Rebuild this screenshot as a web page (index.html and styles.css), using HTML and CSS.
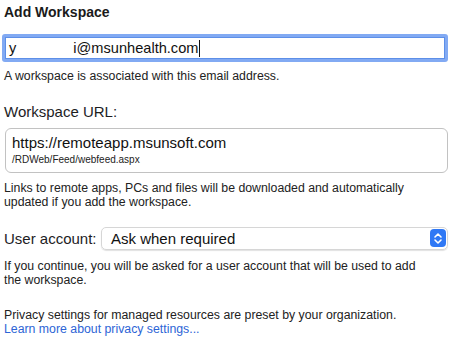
FILE: index.html
```html
<!DOCTYPE html>
<html lang="en">
<head>
  <meta charset="UTF-8">
  <meta name="viewport" content="width=device-width, initial-scale=1.0">
  <title>Add Workspace</title>
  <link rel="stylesheet" href="styles.css">
</head>
<body>
  <div class="sheet">
    <h1 class="title">Add Workspace</h1>

    <div class="field focused">
      <span class="typed">y</span><span class="redacted"></span><span class="typed">i@msunhealth.com</span><span class="caret"></span>
    </div>
    <p class="note note-email">A workspace is associated with this email address.</p>

    <div class="label">Workspace URL:</div>
    <div class="url-box">
      <div class="url-main">https://remoteapp.msunsoft.com</div>
      <div class="url-path">/RDWeb/Feed/webfeed.aspx</div>
    </div>
    <p class="note note-links">Links to remote apps, PCs and files will be downloaded and automatically updated if you add the workspace.</p>

    <div class="account-row">
      <span class="label-inline">User account:</span>
      <div class="popup">
        <span class="popup-value">Ask when required</span>
        <span class="stepper">
          <svg width="10" height="13" viewBox="0 0 10 13"><path d="M2 5 L5 2 L8 5 M2 8 L5 11 L8 8" fill="none" stroke="#fff" stroke-width="1.6" stroke-linecap="round" stroke-linejoin="round"/></svg>
        </span>
      </div>
    </div>
    <p class="note note-account">If you continue, you will be asked for a user account that will be used to add the workspace.</p>

    <p class="note note-privacy">Privacy settings for managed resources are preset by your organization.<br><a href="#" class="link">Learn more about privacy settings...</a></p>
  </div>
</body>
</html>
```

FILE: styles.css
```css
* { box-sizing: border-box; }
body { margin: 0; background: #fff; color: #1d1d1f; font-family: "Liberation Sans", Arial, sans-serif; }
.sheet { padding: 0 2px 0 4px; }
.title { font-size: 14px; font-weight: 700; margin: 0; padding-top: 3px; line-height: 18px; color: #1a1a1a; }

.field { margin: 13px 0 0 -2px; height: 28px; border: 3px solid #82aaf3; border-radius: 3px; background: #fff; display: flex; align-items: center; padding-left: 4px; font-size: 14.6px; color: #111; box-shadow: inset 0 0 0 1px #5d8fe8; }
.redacted { display: inline-block; width: 57px; }
.caret { display: inline-block; width: 1px; height: 17px; background: #111; margin-left: 1px; }

.note { margin: 0; font-size: 12.3px; line-height: 14.5px; color: #222; max-width: 430px; }
.note-email { margin-top: 7px; }

.label { font-size: 15px; margin-top: 19px; line-height: 18px; color: #1d1d1f; }
.url-box { margin: 7px 0 0 1px; height: 45px; border: 1px solid #c2c2c2; border-radius: 6px; padding: 5px 6px 0 6px; }
.url-main { font-size: 15px; line-height: 18px; color: #111; }
.url-path { font-size: 10px; line-height: 14px; color: #222; margin-top: 1px; }
.note-links { margin-top: 8px; }

.account-row { display: flex; align-items: center; margin-top: 17px; }
.label-inline { font-size: 15px; width: 97px; }
.popup { flex: 1; height: 23px; border: 1px solid #d6d6d6; border-radius: 5px; display: flex; align-items: center; justify-content: space-between; padding: 0 1px 0 9px; box-shadow: 0 1px 1px rgba(0,0,0,0.12); }
.popup-value { font-size: 15px; color: #111; }
.stepper { width: 16px; height: 18px; background: #2f78f5; border-radius: 4px; display: flex; align-items: center; justify-content: center; }

.note-account { margin-top: 9px; }
.note-privacy { margin-top: 20px; }
.link { color: #2d65d6; text-decoration: none; }
```
